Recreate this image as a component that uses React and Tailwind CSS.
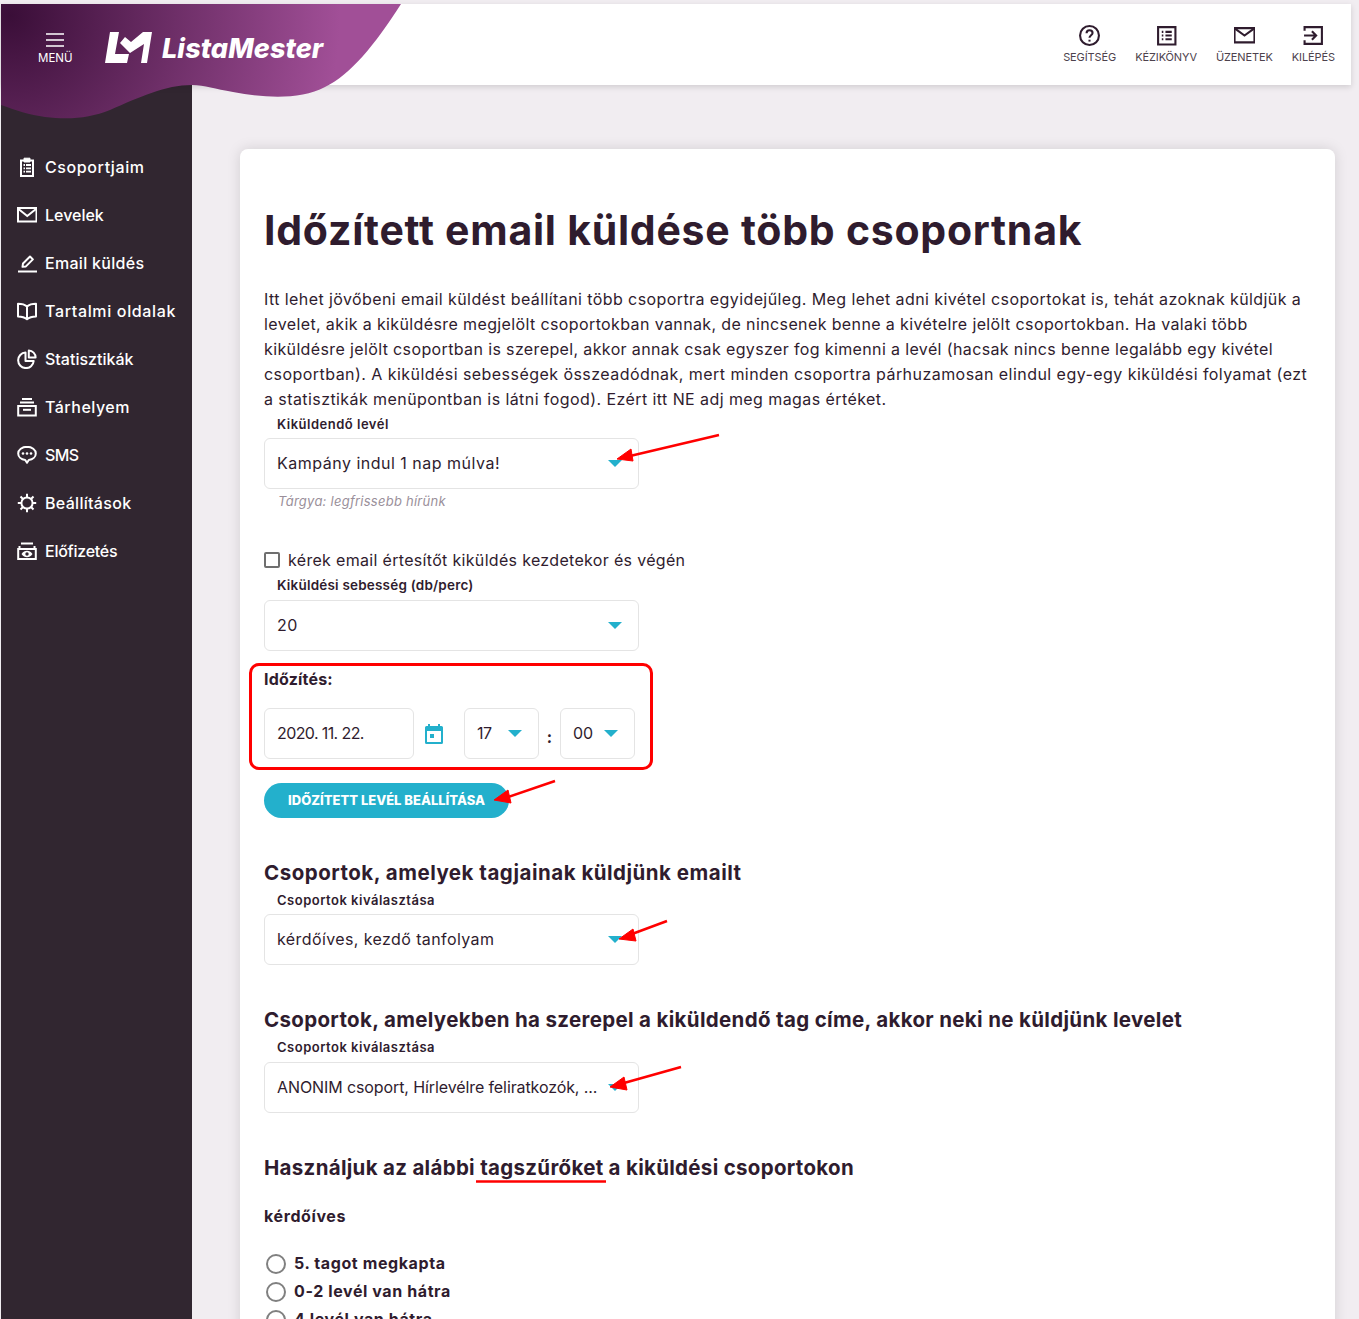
const ink = 'text-[#2f1c2e]'

function Icon({ children, className = 'h-5 w-5', width = 1.7 }) {
  return (
    <svg viewBox="0 0 20 20" fill="none" stroke="currentColor" strokeWidth={width} className={className}>
      {children}
    </svg>
  )
}

const navItems = [
  {
    label: 'Csoportjaim',
    track: 'tracking-[0.6px]',
    icon: (
      <>
        <path d="M4 3.500h12v15.500H4z" />
        <path d="M7 1.200h6v3.800H7z" fill="currentColor" strokeWidth="1" />
        <path d="M6.500 8h1.500M9 8h5M6.500 11.300h1.500M9 11.300h5M6.500 14.600h1.500M9 14.600h5" strokeWidth="1.800" />
      </>
    ),
  },
  {
    label: 'Levelek',
    track: 'tracking-[0px]',
    icon: (
      <>
        <path d="M1 3h18.500v13.500H1z" />
        <path d="M1.500 4l8.750 7 8.750-7" />
      </>
    ),
  },
  {
    label: 'Email küldés',
    track: 'tracking-[0.3px]',
    icon: (
      <>
        <path d="M5.500 13.800l.5-3.300 7-7 2.900 2.900-7 7z" strokeLinejoin="round" />
        <path d="M1 18.500h19" />
      </>
    ),
  },
  {
    label: 'Tartalmi oldalak',
    track: 'tracking-[0.65px]',
    icon: (
      <path d="M10 5.500C8 3.700 4.500 2.800 1 2.800v12.600c3.500 0 7 1 9 2.800 2-1.800 5.500-2.800 9-2.800V2.800c-3.500 0-7 .9-9 2.700zM10 5.500v12.700" strokeLinejoin="round" />
    ),
  },
  {
    label: 'Statisztikák',
    track: 'tracking-[0px]',
    icon: (
      <>
        <path d="M8.500 3.500a7.800 7.800 0 1 0 8.200 8.500h-8.200z" strokeLinejoin="round" />
        <path d="M11.800 1.500a7 7 0 0 1 6.800 7h-6.800z" strokeLinejoin="round" />
      </>
    ),
  },
  {
    label: 'Tárhelyem',
    track: 'tracking-[0.5px]',
    icon: (
      <>
        <path d="M5 2h10M3 5.500h14" />
        <path d="M1.200 9h17.600v9.500H1.200z" />
        <path d="M6 12.800h8" />
      </>
    ),
  },
  {
    label: 'SMS',
    track: 'tracking-[-0.6px]',
    icon: (
      <>
        <path d="M10 1.800c-4.900 0-8.800 2.900-8.800 6.700 0 3.300 3 6 7 6.500l1.800 2.800 1.800-2.800c4-.5 7-3.200 7-6.500 0-3.800-3.900-6.700-8.800-6.700z" strokeLinejoin="round" />
        <circle cx="6" cy="8.500" r="1.300" fill="currentColor" stroke="none" />
        <circle cx="10" cy="8.500" r="1.300" fill="currentColor" stroke="none" />
        <circle cx="14" cy="8.500" r="1.300" fill="currentColor" stroke="none" />
      </>
    ),
  },
  {
    label: 'Beállítások',
    track: 'tracking-[0.3px]',
    icon: (
      <>
        <circle cx="10" cy="10" r="5.600" />
        <path d="M10 .8v3.500M10 15.700v3.500M.8 10h3.500M15.700 10h3.500M3.500 3.500l2.500 2.500M14 14l2.500 2.500M16.500 3.500L14 6M6 14l-2.500 2.500" />
      </>
    ),
  },
  {
    label: 'Előfizetés',
    track: 'tracking-[-0.25px]',
    icon: (
      <>
        <path d="M4 2.500h12M2.500 5v2M17.500 5v2" />
        <path d="M1.200 8h17.600v10H1.200z" />
        <path d="M4.500 13c1.500-2.200 3.500-3.300 5.500-3.300s4 1.100 5.500 3.300c-1.500 2.200-3.500 3.300-5.500 3.300s-4-1.100-5.500-3.300z" fill="currentColor" stroke="none" />
        <circle cx="10" cy="13" r="1.700" fill="#312630" stroke="none" />
      </>
    ),
  },
]

const topLinks = [
  {
    label: 'SEGÍTSÉG',
    icon: (
      <>
        <circle cx="10" cy="10" r="9" />
        <path d="M7.200 7.800c0-1.700 1.300-2.800 2.900-2.800s2.800 1 2.800 2.500c0 2.200-2.900 2.300-2.900 4.700" />
        <path d="M10 14v1.800" strokeWidth="2" />
      </>
    ),
  },
  {
    label: 'KÉZIKÖNYV',
    icon: (
      <>
        <path d="M2 2h16.500v16.500H2z" />
        <path d="M5.500 6.500h1.500M9 6.500h6M5.500 10h1.500M9 10h6M5.500 13.500h1.500M9 13.500h6" />
      </>
    ),
  },
  {
    label: 'ÜZENETEK',
    icon: (
      <>
        <path d="M.5 3h19v13.500H.5z" />
        <path d="M1 3.500l9 6.500 9-6.500" />
      </>
    ),
  },
  {
    label: 'KILÉPÉS',
    icon: (
      <path d="M1.500 5.500V2h16.500v16H1.500v-3.500M1 10h11M8.500 6l4 4-4 4" />
    ),
  },
]

const introLines = [
  { text: 'Itt lehet jövőbeni email küldést beállítani több csoportra egyidejűleg. Meg lehet adni kivétel csoportokat is, tehát azoknak küldjük a', track: 'tracking-[0.41px]' },
  { text: 'levelet, akik a kiküldésre megjelölt csoportokban vannak, de nincsenek benne a kivételre jelölt csoportokban. Ha valaki több', track: 'tracking-[0.38px]' },
  { text: 'kiküldésre jelölt csoportban is szerepel, akkor annak csak egyszer fog kimenni a levél (hacsak nincs benne legalább egy kivétel', track: 'tracking-[0.37px]' },
  { text: 'csoportban). A kiküldési sebességek összeadódnak, mert minden csoportra párhuzamosan elindul egy-egy kiküldési folyamat (ezt', track: 'tracking-[0.45px]' },
  { text: 'a statisztikák menüpontban is látni fogod). Ezért itt NE adj meg magas értéket.', track: 'tracking-[0.42px]' },
]

function Caret() {
  return <span className="h-0 w-0 border-x-[7px] border-t-[7px] border-x-transparent border-t-[#23b0cc]" />
}

function SelectBox({ value, className = 'w-[375px]', textClass = 'tracking-[0.5px]' }) {
  return (
    <div className={`flex h-[51px] items-center justify-between rounded-md border border-[#e4e4e4] bg-white pl-3 pr-[16px] text-[16px] ${className}`}>
      <span className={`whitespace-nowrap pb-[2px] ${textClass}`}>{value}</span>
      <Caret />
    </div>
  )
}

function FieldLabel({ children }) {
  return <div className="h-[18px] pl-[13px] text-[13px] font-semibold leading-[18px] tracking-[0.5px]">{children}</div>
}

function SubTitle({ children, className }) {
  return <h2 className={`text-[20.500px] font-bold leading-[30px] ${className}`}>{children}</h2>
}

function Radio({ label }) {
  return (
    <div className="flex h-[28px] items-center gap-[8px] pl-[2px] text-[16px] font-bold tracking-[0.6px]">
      <span className="h-5 w-5 shrink-0 rounded-full border-2 border-[#808080]" />
      <span className="pb-[3px]">{label}</span>
    </div>
  )
}

export default function App() {
  return (
    <div className={`relative flex h-[1319px] flex-col overflow-hidden bg-[#f1edf1] font-[Inter,sans-serif] ${ink}`}>
      <header className="z-10 ml-[1px] mr-[8px] mt-[4px] flex h-[81px] shrink-0 items-start justify-end gap-[19px] bg-white pr-[16px] pt-[21px] shadow-[0_2px_6px_rgba(0,0,0,0.14)]">
        {topLinks.map((link) => (
          <div key={link.label} className="flex flex-col items-center text-[#2f1c2e]">
            <Icon className="h-[21px] w-[21px]" width={2}>{link.icon}</Icon>
            <span className="mt-[4px] text-[11px] leading-[14px] tracking-[-0.1px] text-[#4d424d]">{link.label}</span>
          </div>
        ))}
      </header>

      {/* the wave with the logo lies over the header and the sidebar */}
      <div className="absolute left-0 top-0 z-20 h-[125px] w-[405px] text-white">
        <svg viewBox="0 0 405 125" className="absolute inset-0 h-full w-full">
          <defs>
            <radialGradient id="wave" cx="10" cy="15" r="330" gradientUnits="userSpaceOnUse">
              <stop offset="0" stopColor="#3a0e38" />
              <stop offset="1" stopColor="#a14f97" />
            </radialGradient>
          </defs>
          <path
            d="M1 4H401C375 45 350 75 325 87C300 100 265 98 233 92C215 89 205 85 192 85C165 85 140 97 110 110C90 118 70 120 45 117C30 115 15 110 1 105Z"
            fill="url(#wave)"
          />
          <path d="M110 32h9l-4 22h14l-2 9H105z" fill="#fff" />
          <path d="M120 43l5-6 6 5 12-10h9l-5 31h-6l3-19-14 9z" fill="#fff" />
          <path d="M46 34h18M46 40h18M46 46h18" stroke="#fff" strokeWidth="1.700" />
        </svg>
        <span className="absolute left-[38px] top-[51px] text-[11.500px] leading-[14px]">MENÜ</span>
        <span className="absolute left-[162px] top-[32px] text-[27px] font-extrabold italic leading-[33px] tracking-[0.1px]">ListaMester</span>
      </div>

      <div className="flex min-h-0 flex-1">
        <aside className="ml-[1px] w-[191px] shrink-0 bg-[#312630] pl-[16px] pt-[58px] text-white">
          {navItems.map((item) => (
            <div key={item.label} className={`flex h-[48px] items-center gap-[8px] text-[16px] font-[450] ${item.track}`}>
              <Icon width={2}>{item.icon}</Icon>
              <span>{item.label}</span>
            </div>
          ))}
        </aside>

        <main className="min-w-0 flex-1 pl-[48px] pr-[24px] pt-[64px]">
          <section className="h-[1300px] rounded-lg bg-white pl-[24px] pr-[20px] pt-[51px] shadow-[0_0_14px_rgba(0,0,0,0.13)]">
            <h1 className="text-[41px] font-bold leading-[60px] tracking-[0.75px]">Időzített email küldése több csoportnak</h1>
            <div className="mt-[27px] whitespace-nowrap text-[16px] leading-[25px]">
              {introLines.map((line) => (
                <p key={line.text} className={line.track}>{line.text}</p>
              ))}
            </div>

            <div className="mt-[3px]">
              <FieldLabel>Kiküldendő levél</FieldLabel>
              <div className="mt-[5px]">
                <SelectBox value="Kampány indul 1 nap múlva!" />
              </div>
              <p className="mt-[3px] h-[18px] pl-[14px] text-[13px] italic leading-[18px] tracking-[0.25px] text-[#9a8f9a]">Tárgya: legfrissebb hírünk</p>
            </div>

            <label className="mt-[40px] flex h-[20px] items-center gap-[8px] text-[16px] tracking-[0.32px]">
              <span className="h-4 w-4 rounded-[2px] border-2 border-[#6f6f6f]" />
              kérek email értesítőt kiküldés kezdetekor és végén
            </label>

            <div className="mt-[5px]">
              <div className="h-[20px] pl-[13px] text-[13.500px] font-semibold leading-[20px] tracking-[0.2px]">Kiküldési sebesség (db/perc)</div>
              <div className="mt-[5px]">
                <SelectBox value="20" />
              </div>
            </div>

            <div className="-ml-[15px] mt-[12px] h-[107px] w-[404px] rounded-[10px] border-[3px] border-[#ff0000] pl-[12px] pt-[1px]">
              <div className="h-[24px] text-[16px] font-bold leading-[24px] tracking-[0.2px]">Időzítés:</div>
              <div className="mt-[17px] flex items-center">
                <div className="flex h-[51px] w-[150px] items-center rounded-md border border-[#e4e4e4] pb-[2px] pl-3 text-[16px] tracking-[-0.6px]">2020. 11. 22.</div>
                <svg viewBox="0 0 18 20" className="ml-[11px] h-[20px] w-[18px]" fill="#23b0cc">
                  <path d="M3 0h2v2h8V0h2v2h1.500A1.500 1.500 0 0 1 18 3.500v15a1.500 1.500 0 0 1-1.500 1.500h-15A1.500 1.500 0 0 1 0 18.500v-15A1.500 1.500 0 0 1 1.500 2H3zM2 7v11h14V7zm3 3h4v4H5z" fillRule="evenodd" />
                </svg>
                <div className="ml-[21px]">
                  <SelectBox value="17" className="w-[75px]" textClass="tracking-[-0.4px]" />
                </div>
                <span className="w-[21px] pt-[7px] text-center text-[16px] font-bold">:</span>
                <SelectBox value="00" className="w-[75px]" textClass="tracking-[0px]" />
              </div>
            </div>

            <button className="mt-[13px] flex h-[35px] w-[245px] items-center justify-center rounded-full bg-[#23b0cc] text-[13px] font-extrabold text-white">
              IDŐZÍTETT LEVÉL BEÁLLÍTÁSA
            </button>

            <SubTitle className="mt-[40px] tracking-[0.5px]">Csoportok, amelyek tagjainak küldjünk emailt</SubTitle>
            <div className="mt-[3px]">
              <FieldLabel>Csoportok kiválasztása</FieldLabel>
              <div className="mt-[5px]">
                <SelectBox value="kérdőíves, kezdő tanfolyam" textClass="tracking-[0.4px]" />
              </div>
            </div>

            <SubTitle className="mt-[40px] tracking-[0.33px]">Csoportok, amelyekben ha szerepel a kiküldendő tag címe, akkor neki ne küldjünk levelet</SubTitle>
            <div className="mt-[3px]">
              <FieldLabel>Csoportok kiválasztása</FieldLabel>
              <div className="mt-[6px]">
                <SelectBox value="ANONIM csoport, Hírlevélre feliratkozók, ..." textClass="tracking-[-0.1px]" />
              </div>
            </div>

            <SubTitle className="mt-[40px] tracking-[0.3px]">Használjuk az alábbi tagszűrőket a kiküldési csoportokon</SubTitle>
            <div className="mt-[21px] h-[24px] text-[16px] font-bold leading-[24px] tracking-[0.6px]">kérdőíves</div>
            <div className="mt-[22px]">
              <Radio label="5. tagot megkapta" />
              <Radio label="0-2 levél van hátra" />
              <Radio label="4 levél van hátra" />
            </div>
          </section>
        </main>
      </div>

      {/* red marks drawn on top of the screenshot */}
      <svg viewBox="0 0 1359 1319" className="pointer-events-none absolute inset-0 z-30 h-[1319px] w-[1359px]">
        <g stroke="#f00" strokeWidth="2.500" fill="#f00">
          <path d="M719 435L630 456" />
          <path d="M617 459l14-10 2 12z" strokeWidth="1" />
          <path d="M555 781L508 797" />
          <path d="M494 800l14-10 3 13z" strokeWidth="1" />
          <path d="M667 921L632 934" />
          <path d="M619 939l14-10 3 12z" strokeWidth="1" />
          <path d="M681 1067L624 1083" />
          <path d="M610 1087l14-10 3 13z" strokeWidth="1" />
          <path d="M476 1181.500H606" />
        </g>
      </svg>
    </div>
  )
}
